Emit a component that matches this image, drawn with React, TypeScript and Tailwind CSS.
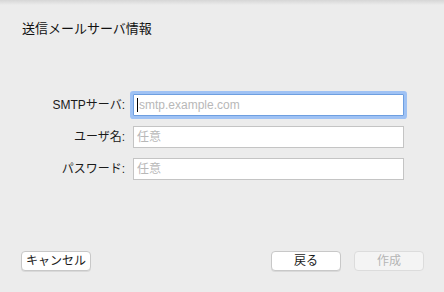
import React from 'react';

const font = { fontFamily: '"Liberation Sans", "Noto Sans CJK JP", sans-serif' };

function Field({ label, placeholder, focused }: { label: string; placeholder: string; focused?: boolean }) {
    return (
        <div className="flex items-center h-[22px]">
            <div className="w-[126px] pr-[1px] text-right text-[12px] text-[#1a1a1a] leading-none">{label}</div>
            <div
                className={
                    focused
                        ? 'ml-[7px] w-[271px] h-[22px] bg-white border border-[#6e9fe0] shadow-[0_0_0_3px_#9fc2f4] rounded-[1px] flex items-center pl-[3px]'
                        : 'ml-[7px] w-[271px] h-[22px] bg-white border border-[#c4c4c4] flex items-center pl-[3px]'
                }
            >
                {focused && <span className="w-[1px] h-[14px] bg-black mr-[1px]" />}
                <span className="text-[12px] text-[#b8b8b8] leading-none">{placeholder}</span>
            </div>
        </div>
    );
}

function Button({ children, disabled }: { children: React.ReactNode; disabled?: boolean }) {
    return (
        <button
            className={
                disabled
                    ? 'w-[70px] h-[20px] rounded-[4px] border border-[#dcdcdc] bg-[#f4f4f4] text-[12px] text-[#b4b4b4] leading-none'
                    : 'w-[70px] h-[20px] rounded-[4px] border border-[#c8c8c8] bg-white text-[12px] text-[#1a1a1a] leading-none shadow-[0_1px_0_rgba(0,0,0,0.08)]'
            }
        >
            {children}
        </button>
    );
}

export default function App() {
    return (
        <div className="w-[444px] h-[292px] bg-[#ececec] flex flex-col relative overflow-hidden" style={font}>
            <div className="absolute top-0 left-0 right-0 h-[5px] bg-gradient-to-b from-[#d6d6d6] to-[#ececec]" />
            <div className="pl-[22px] pt-[21px] text-[13px] text-[#111] leading-[16px]">送信メールサーバ情報</div>

            <div className="mt-[57px] flex flex-col gap-[10px]">
                <Field label="SMTPサーバ:" placeholder="smtp.example.com" focused />
                <Field label="ユーザ名:" placeholder="任意" />
                <Field label="パスワード:" placeholder="任意" />
            </div>

            <div className="mt-auto mb-[21px] flex items-center pl-[21px] pr-[20px]">
                <Button>キャンセル</Button>
                <div className="flex-1" />
                <div className="flex gap-[13px]">
                    <Button>戻る</Button>
                    <Button disabled>作成</Button>
                </div>
            </div>
        </div>
    );
}
